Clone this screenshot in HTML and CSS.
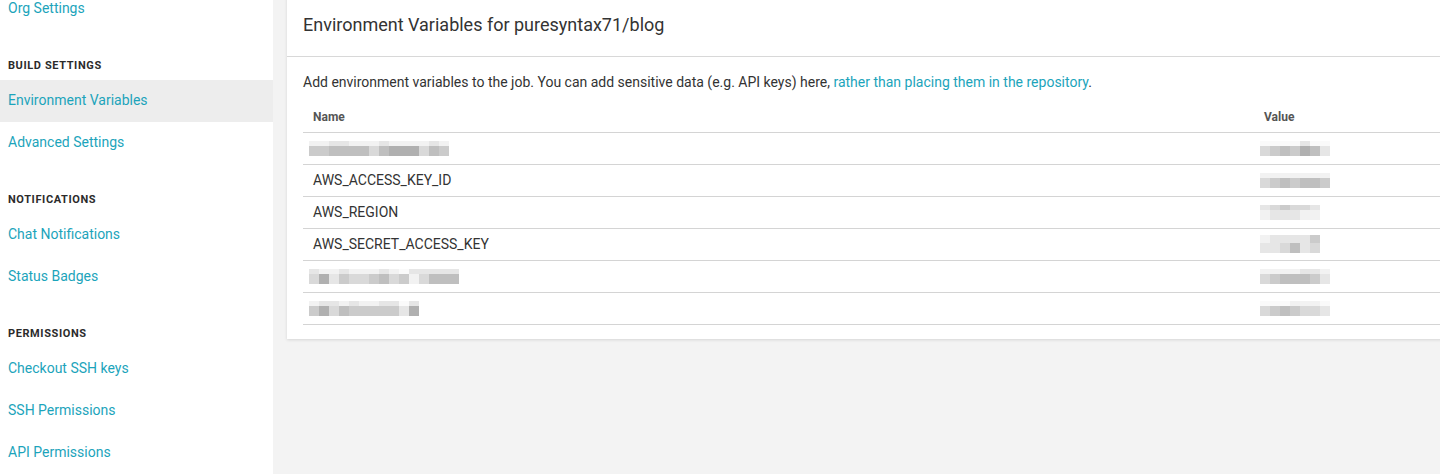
FILE: index.html
```html
<!DOCTYPE html>
<html>
<head>
<meta charset="utf-8">
<link rel="stylesheet" href="styles.css">
</head>
<body>
<div class="page">
  <aside class="sidebar">
    <div class="nav-list">
      <a class="nav-item">Org Settings</a>
      <div class="nav-heading">Build Settings</div>
      <a class="nav-item active">Environment Variables</a>
      <a class="nav-item">Advanced Settings</a>
      <div class="nav-heading">Notifications</div>
      <a class="nav-item">Chat Notifications</a>
      <a class="nav-item">Status Badges</a>
      <div class="nav-heading">Permissions</div>
      <a class="nav-item">Checkout SSH keys</a>
      <a class="nav-item">SSH Permissions</a>
      <a class="nav-item">API Permissions</a>
    </div>
  </aside>
  <main class="main">
    <section class="card">
      <header class="card-header">Environment Variables for puresyntax71/blog</header>
      <div class="card-body">
        <p class="intro">Add environment variables to the job. You can add sensitive data (e.g. API keys) here, <a class="link">rather than placing them in the repository</a>.</p>
        <table class="vars">
          <thead>
            <tr><th class="col-name">Name</th><th>Value</th></tr>
          </thead>
          <tbody>
            <tr>
              <td>
                <span class="blob">
                  <span class="brow top"><i class="s1"></i><i class="s1"></i><i class="s2"></i><i class="s2"></i><i class="s1"></i><i class="s1"></i><i class="s1"></i><i class="s2"></i><i class="s1"></i><i class="s1"></i><i class="s1"></i><i class="s1"></i><i class="s2"></i><i class="s1"></i></span>
                  <span class="brow"><i class="s4"></i><i class="s4"></i><i class="s5"></i><i class="s5"></i><i class="s5"></i><i class="s5"></i><i class="s3"></i><i class="s5"></i><i class="s6"></i><i class="s6"></i><i class="s6"></i><i class="s3"></i><i class="s5"></i><i class="s4"></i></span>
                </span>
              </td>
              <td>
                <span class="blob">
                  <span class="brow top"><i class="s0"></i><i class="s0"></i><i class="s0"></i><i class="s0"></i><i class="s2"></i><i class="s0"></i><i class="s0"></i></span>
                  <span class="brow"><i class="s3"></i><i class="s4"></i><i class="s5"></i><i class="s4"></i><i class="s6"></i><i class="s5"></i><i class="s2"></i></span>
                </span>
              </td>
            </tr>
            <tr>
              <td>AWS_ACCESS_KEY_ID</td>
              <td>
                <span class="blob">
                  <span class="brow top"><i class="s1"></i><i class="s1"></i><i class="s1"></i><i class="s1"></i><i class="s1"></i><i class="s1"></i><i class="s1"></i></span>
                  <span class="brow"><i class="s3"></i><i class="s4"></i><i class="s5"></i><i class="s4"></i><i class="s5"></i><i class="s5"></i><i class="s4"></i></span>
                </span>
              </td>
            </tr>
            <tr>
              <td>AWS_REGION</td>
              <td>
                <span class="blob">
                  <span class="brow top"><i class="s2"></i><i class="s3"></i><i class="s4"></i><i class="s3"></i><i class="s3"></i><i class="s2"></i></span>
                  <span class="brow"><i class="s1"></i><i class="s2"></i><i class="s2"></i><i class="s2"></i><i class="s1"></i><i class="s1"></i></span>
                </span>
              </td>
            </tr>
            <tr>
              <td>AWS_SECRET_ACCESS_KEY</td>
              <td>
                <span class="blob">
                  <span class="brow top2"><i class="s1"></i><i class="s2"></i><i class="s2"></i><i class="s2"></i><i class="s2"></i><i class="s4"></i></span>
                  <span class="brow"><i class="s2"></i><i class="s2"></i><i class="s3"></i><i class="s5"></i><i class="s2"></i><i class="s3"></i></span>
                </span>
              </td>
            </tr>
            <tr>
              <td>
                <span class="blob">
                  <span class="brow top"><i class="s2"></i><i class="s1"></i><i class="s1"></i><i class="s2"></i><i class="s1"></i><i class="s1"></i><i class="s1"></i><i class="s2"></i><i class="s1"></i><i class="s0"></i><i class="s2"></i><i class="s2"></i><i class="s2"></i><i class="s2"></i><i class="s2"></i></span>
                  <span class="brow"><i class="s3"></i><i class="s6"></i><i class="s2"></i><i class="s4"></i><i class="s3"></i><i class="s3"></i><i class="s4"></i><i class="s5"></i><i class="s3"></i><i class="s4"></i><i class="s1"></i><i class="s3"></i><i class="s5"></i><i class="s5"></i><i class="s5"></i></span>
                </span>
              </td>
              <td>
                <span class="blob">
                  <span class="brow top"><i class="s1"></i><i class="s1"></i><i class="s1"></i><i class="s1"></i><i class="s2"></i><i class="s2"></i><i class="s1"></i></span>
                  <span class="brow"><i class="s3"></i><i class="s4"></i><i class="s5"></i><i class="s5"></i><i class="s5"></i><i class="s4"></i><i class="s2"></i></span>
                </span>
              </td>
            </tr>
            <tr>
              <td>
                <span class="blob">
                  <span class="brow top"><i class="s1"></i><i class="s2"></i><i class="s2"></i><i class="s1"></i><i class="s2"></i><i class="s1"></i><i class="s1"></i><i class="s2"></i><i class="s2"></i><i class="s0"></i><i class="s2"></i></span>
                  <span class="brow"><i class="s4"></i><i class="s6"></i><i class="s3"></i><i class="s5"></i><i class="s4"></i><i class="s4"></i><i class="s4"></i><i class="s4"></i><i class="s4"></i><i class="s2"></i><i class="s6"></i></span>
                </span>
              </td>
              <td>
                <span class="blob">
                  <span class="brow top"><i class="s0"></i><i class="s0"></i><i class="s0"></i><i class="s1"></i><i class="s1"></i><i class="s1"></i><i class="s0"></i></span>
                  <span class="brow"><i class="s3"></i><i class="s4"></i><i class="s5"></i><i class="s4"></i><i class="s3"></i><i class="s3"></i><i class="s2"></i></span>
                </span>
              </td>
            </tr>
          </tbody>
        </table>
      </div>
    </section>
  </main>
</div>
</body>
</html>
```
FILE: styles.css
```css
html, body {
  margin: 0;
  padding: 0;
  height: 474px;
  overflow: hidden;
  background: #f3f3f3;
  font-family: Roboto, "Liberation Sans", Arial, sans-serif;
  color: #333;
}

.page {
  display: grid;
  grid-template-columns: 273px 1fr;
  height: 474px;
}

.sidebar {
  background: #fff;
  overflow: hidden;
}

.nav-list {
  display: flex;
  flex-direction: column;
  margin-top: -12px;
}

.nav-item {
  display: flex;
  align-items: center;
  box-sizing: border-box;
  height: 42px;
  padding: 0 0 2px 8px;
  font-size: 14px;
  color: #1ca4bb;
  text-decoration: none;
  cursor: pointer;
}

.nav-item.active {
  background: #ededed;
}

.nav-heading {
  padding: 28px 0 6px 8px;
  font-size: 11px;
  line-height: 16px;
  font-weight: 700;
  letter-spacing: 0.6px;
  text-transform: uppercase;
  color: #2b2b2b;
}

.main {
  padding-left: 14px;
  overflow: hidden;
}

.card {
  background: #fff;
  margin-top: -6px;
  margin-right: -24px;
  box-shadow: 0 1px 3px rgba(0, 0, 0, 0.12);
}

.card-header {
  padding: 19px 16px 19px;
  font-size: 18px;
  line-height: 24px;
  color: #333;
  border-bottom: 1px solid #d8d8d8;
}

.card-body {
  padding: 15px 16px 14px;
}

.intro {
  margin: 0 0 9px;
  font-size: 14px;
  line-height: 20px;
  color: #333;
}

.link {
  color: #1ca4bb;
  cursor: pointer;
}

.vars {
  width: 100%;
  border-collapse: collapse;
}

.vars th {
  box-sizing: border-box;
  height: 31px;
  padding: 2px 10px 0;
  text-align: left;
  font-size: 12px;
  font-weight: 700;
  color: #555;
  border-bottom: 1px solid #d4d4d4;
}

.vars th.col-name {
  width: 951px;
}

.vars td {
  box-sizing: border-box;
  height: 32px;
  padding: 0 10px 1px;
  font-size: 14px;
  color: #333;
  border-bottom: 1px solid #d4d4d4;
  vertical-align: middle;
}

.blob {
  display: inline-flex;
  flex-direction: column;
  margin-left: -4px;
  vertical-align: middle;
}

.brow {
  display: flex;
  height: 10px;
}

.brow.top {
  height: 5px;
}

.brow.top2 {
  height: 8px;
}

.brow i {
  display: block;
  width: 10px;
}

.s0 { background: #fafafa; }
.s1 { background: #f2f2f2; }
.s2 { background: #e6e6e6; }
.s3 { background: #d9d9d9; }
.s4 { background: #cbcbcb; }
.s5 { background: #bfbfbf; }
.s6 { background: #b0b0b0; }
```
